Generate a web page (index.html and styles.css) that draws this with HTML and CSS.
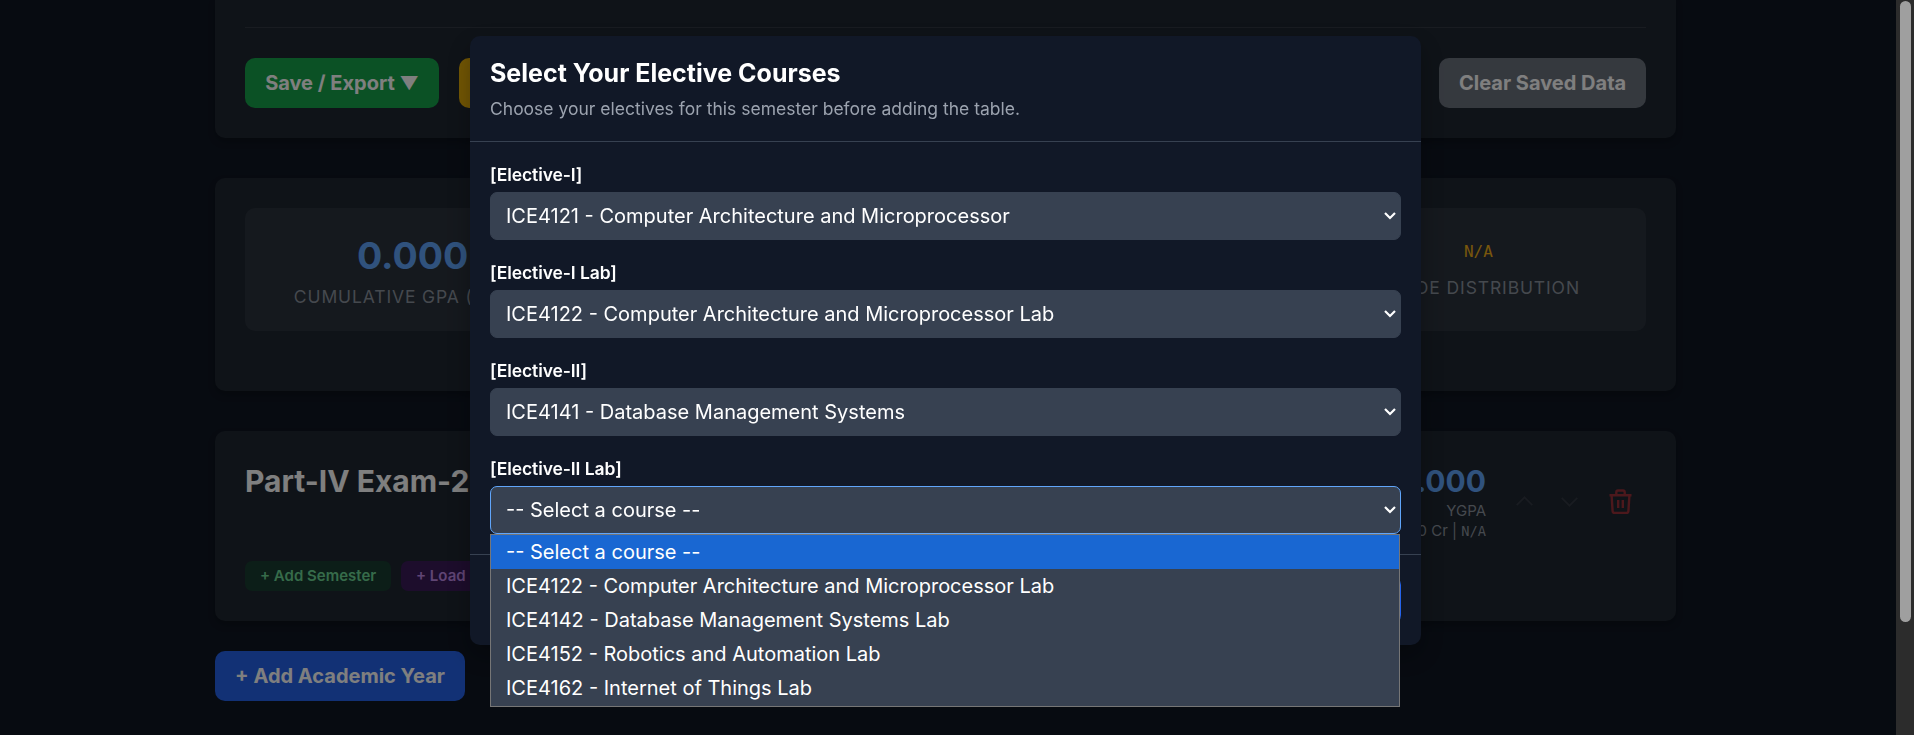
FILE: index.html
```html
<!DOCTYPE html>
<html lang="en">
<head>
<meta charset="utf-8">
<title>GPA Calculator</title>
<link rel="stylesheet" href="styles.css">
</head>
<body>
<main class="page">
  <section class="card card-actions">
    <div class="actions">
      <button class="btn btn-green">Save / Export <span class="caret">▼</span></button>
      <button class="btn btn-amber"></button>
      <button class="btn btn-gray">Clear Saved Data</button>
    </div>
  </section>
  <section class="card card-stats">
    <div class="stats">
      <div class="stat"><div class="stat-value">0.000</div><div class="stat-label">Cumulative GPA (CGPA)</div></div>
      <div class="stat"></div>
      <div class="stat"></div>
      <div class="stat stat-grades"><div class="stat-mono">N/A</div><div class="stat-label">Grade Distribution</div></div>
    </div>
  </section>
  <section class="card card-year">
    <div class="year-head">
      <h2 class="year-title">Part-IV Exam-2</h2>
      <div class="year-side">
        <div class="year-stats">
          <div class="year-gpa">0.000</div>
          <div class="year-note">YGPA</div>
          <div class="year-note">0 Cr | <span class="mono">N/A</span></div>
        </div>
        <div class="year-tools">
          <svg class="chev" viewBox="0 0 24 24"><path d="M4.500 15.500l7.500-7.500 7.500 7.500"/></svg>
          <svg class="chev" viewBox="0 0 24 24"><path d="M4.500 8.500l7.500 7.500 7.500-7.500"/></svg>
          <svg class="trash" viewBox="0 0 25 25"><path d="M1.500 6.200h22M3.600 6.500l1 15.700q.15 1.800 1.900 1.800h12q1.750 0 1.900-1.800l1-15.700M8.300 6v-2.800q0-1.700 1.700-1.700h5q1.700 0 1.700 1.700v2.800M10.200 11v8M14.800 11v8"/></svg>
        </div>
      </div>
    </div>
    <div class="chips">
      <button class="chip chip-green">+ Add Semester</button>
      <button class="chip chip-purple">+ Load</button>
    </div>
  </section>
  <button class="btn btn-blue">+ Add Academic Year</button>
</main>

<div class="overlay">
  <div class="modal">
    <header class="modal-head">
      <h3 class="modal-title">Select Your Elective Courses</h3>
      <p class="modal-sub">Choose your electives for this semester before adding the table.</p>
    </header>
    <div class="modal-body">
      <div class="field">
        <div class="label">[Elective-I]</div>
        <div class="select">ICE4121 - Computer Architecture and Microprocessor<svg class="arrow" viewBox="0 0 12 8"><path d="M1 1l5 5 5-5"/></svg></div>
      </div>
      <div class="field">
        <div class="label">[Elective-I Lab]</div>
        <div class="select">ICE4122 - Computer Architecture and Microprocessor Lab<svg class="arrow" viewBox="0 0 12 8"><path d="M1 1l5 5 5-5"/></svg></div>
      </div>
      <div class="field">
        <div class="label">[Elective-II]</div>
        <div class="select">ICE4141 - Database Management Systems<svg class="arrow" viewBox="0 0 12 8"><path d="M1 1l5 5 5-5"/></svg></div>
      </div>
      <div class="field">
        <div class="label">[Elective-II Lab]</div>
        <div class="select select-open">-- Select a course --<svg class="arrow" viewBox="0 0 12 8"><path d="M1 1l5 5 5-5"/></svg></div>
        <div class="menu">
          <div class="option option-active">-- Select a course --</div>
          <div class="option">ICE4122 - Computer Architecture and Microprocessor Lab</div>
          <div class="option">ICE4142 - Database Management Systems Lab</div>
          <div class="option">ICE4152 - Robotics and Automation Lab</div>
          <div class="option">ICE4162 - Internet of Things Lab</div>
        </div>
      </div>
    </div>
    <footer class="modal-foot"><button class="confirm"></button></footer>
  </div>
</div>
<div class="scrollbar"><div class="thumb"></div></div>
</body>
</html>
```
FILE: styles.css
```css
* { box-sizing: border-box; margin: 0; }
body {
  height: 735px;
  overflow: hidden;
  background: #0f1622;
  font-family: Inter, "Liberation Sans", sans-serif;
  font-size: 20px;
  line-height: 30px;
  color: #fff;
}
button { font: inherit; color: inherit; border: 0; white-space: nowrap; }
.page { width: 1461px; margin-left: 215px; }
.card {
  background: #1e2630;
  border-radius: 10px;
  padding: 30px;
  margin-bottom: 40px;
  box-shadow: 0 4px 7px rgba(0, 0, 0, .22);
}
.card-actions { height: 138px; padding-top: 27px; border-radius: 0 0 10px 10px; }
.actions { display: flex; gap: 20px; padding-top: 30px; border-top: 1px solid #323842; }
.btn { height: 50px; padding: 0 20px; border-radius: 10px; font-weight: 700; }
.btn-green { width: 194px; background: #16a34a; }
.caret { font-size: 18.5px; }
.btn-amber { width: 150px; background: #e6ae08; }
.btn-gray { width: 207px; margin-left: auto; background: #6b727d; }
.btn-blue { display: block; width: 250px; background: #2563eb; }
.card-stats { height: 213px; }
.stats { display: grid; grid-template-columns: repeat(4, 1fr); grid-template-rows: 123px; gap: 20px; }
.stat { background: #2b323c; border-radius: 10px; padding: 25px 20px 0; text-align: center; white-space: nowrap; }
.stat-value { font-size: 37.5px; line-height: 45px; font-weight: 700; color: #60a5fa; }
.stat-label { font-size: 17.5px; line-height: 25px; margin-top: 6px; letter-spacing: .88px; text-transform: uppercase; color: #9ca3af; opacity: .85; }
.stat-grades { padding-top: 30px; }
.stat-mono { font-family: "DejaVu Sans Mono", monospace; font-size: 16px; line-height: 27px; color: #f0ae18; }
.stat-grades .stat-label { margin-top: 10px; }
.card-year { height: 190px; margin-bottom: 30px; }
.year-head { display: flex; justify-content: space-between; height: 80px; margin-bottom: 20px; }
.year-title { font-size: 30px; line-height: 40px; font-weight: 700; }
.year-side { display: flex; gap: 26px; }
.year-stats { text-align: right; }
.year-gpa { font-size: 30px; line-height: 40px; font-weight: 700; color: #60a5fa; }
.year-note { font-size: 15px; line-height: 20px; color: #8b929d; }
.mono { font-family: "DejaVu Sans Mono", monospace; font-size: 13.7px; }
.year-tools { display: flex; align-items: center; width: 134px; }
.chev { width: 25px; height: 25px; flex: none; margin-right: 20px; fill: none; stroke: #323842; stroke-width: 1.7; }
.trash { width: 25px; height: 25px; flex: none; margin-left: 6px; fill: none; stroke: #983038; stroke-width: 2.4; }
.chips { display: flex; gap: 10px; }
.chip { height: 30px; padding: 0 15px; border-radius: 7px; font-size: 15px; font-weight: 600; }
.chip-green { width: 146px; background: #193c30; color: #6dd795; }
.chip-purple { background: #3a1a58; color: #c08ae8; }

.overlay {
  position: fixed;
  inset: 0 18px 0 0;
  background: rgba(0, 0, 0, .5);
  padding: 36px 475px 0 470px;
}
.modal { height: 609px; background: #111827; border-radius: 10px; box-shadow: 0 10px 25px rgba(0, 0, 0, .3); }
.modal-head { height: 106px; padding: 20px; border-bottom: 1px solid #374151; }
.modal-title { font-size: 25px; line-height: 35px; font-weight: 700; }
.modal-sub { margin-top: 5px; font-size: 17.5px; line-height: 25px; color: #9ca3af; }
.modal-body { display: flex; flex-direction: column; gap: 20px; padding: 20px; }
.field { position: relative; }
.label { font-size: 17.5px; line-height: 25px; margin-bottom: 5px; font-weight: 600; letter-spacing: -.08px; }
.select {
  display: flex;
  align-items: center;
  justify-content: space-between;
  height: 48px;
  padding: 0 4px 0 15px;
  background: #374151;
  border: 1px solid #374151;
  border-radius: 7px;
}
.select-open { border-color: #60a5fa; }
.arrow { width: 12px; height: 8px; fill: none; stroke: #fff; stroke-width: 2.2; }
.menu {
  position: absolute;
  top: 78px;
  left: 0;
  width: 910px;
  height: 173px;
  background: #374151;
  border: 1px solid #767676;
}
.option { height: 34px; line-height: 34px; padding-left: 15px; }
.option-active { background: #1967d2; }
.modal-foot { display: flex; justify-content: flex-end; padding: 20px; border-top: 1px solid #374151; }
.confirm { width: 150px; height: 50px; border-radius: 10px; background: #2563eb; }
.scrollbar { position: fixed; top: 0; right: 0; width: 18px; height: 735px; padding: 1px 3px 0 4px; background: #2c2c2c; }
.thumb { height: 621px; border-radius: 6px; background: #9f9f9f; }
```
